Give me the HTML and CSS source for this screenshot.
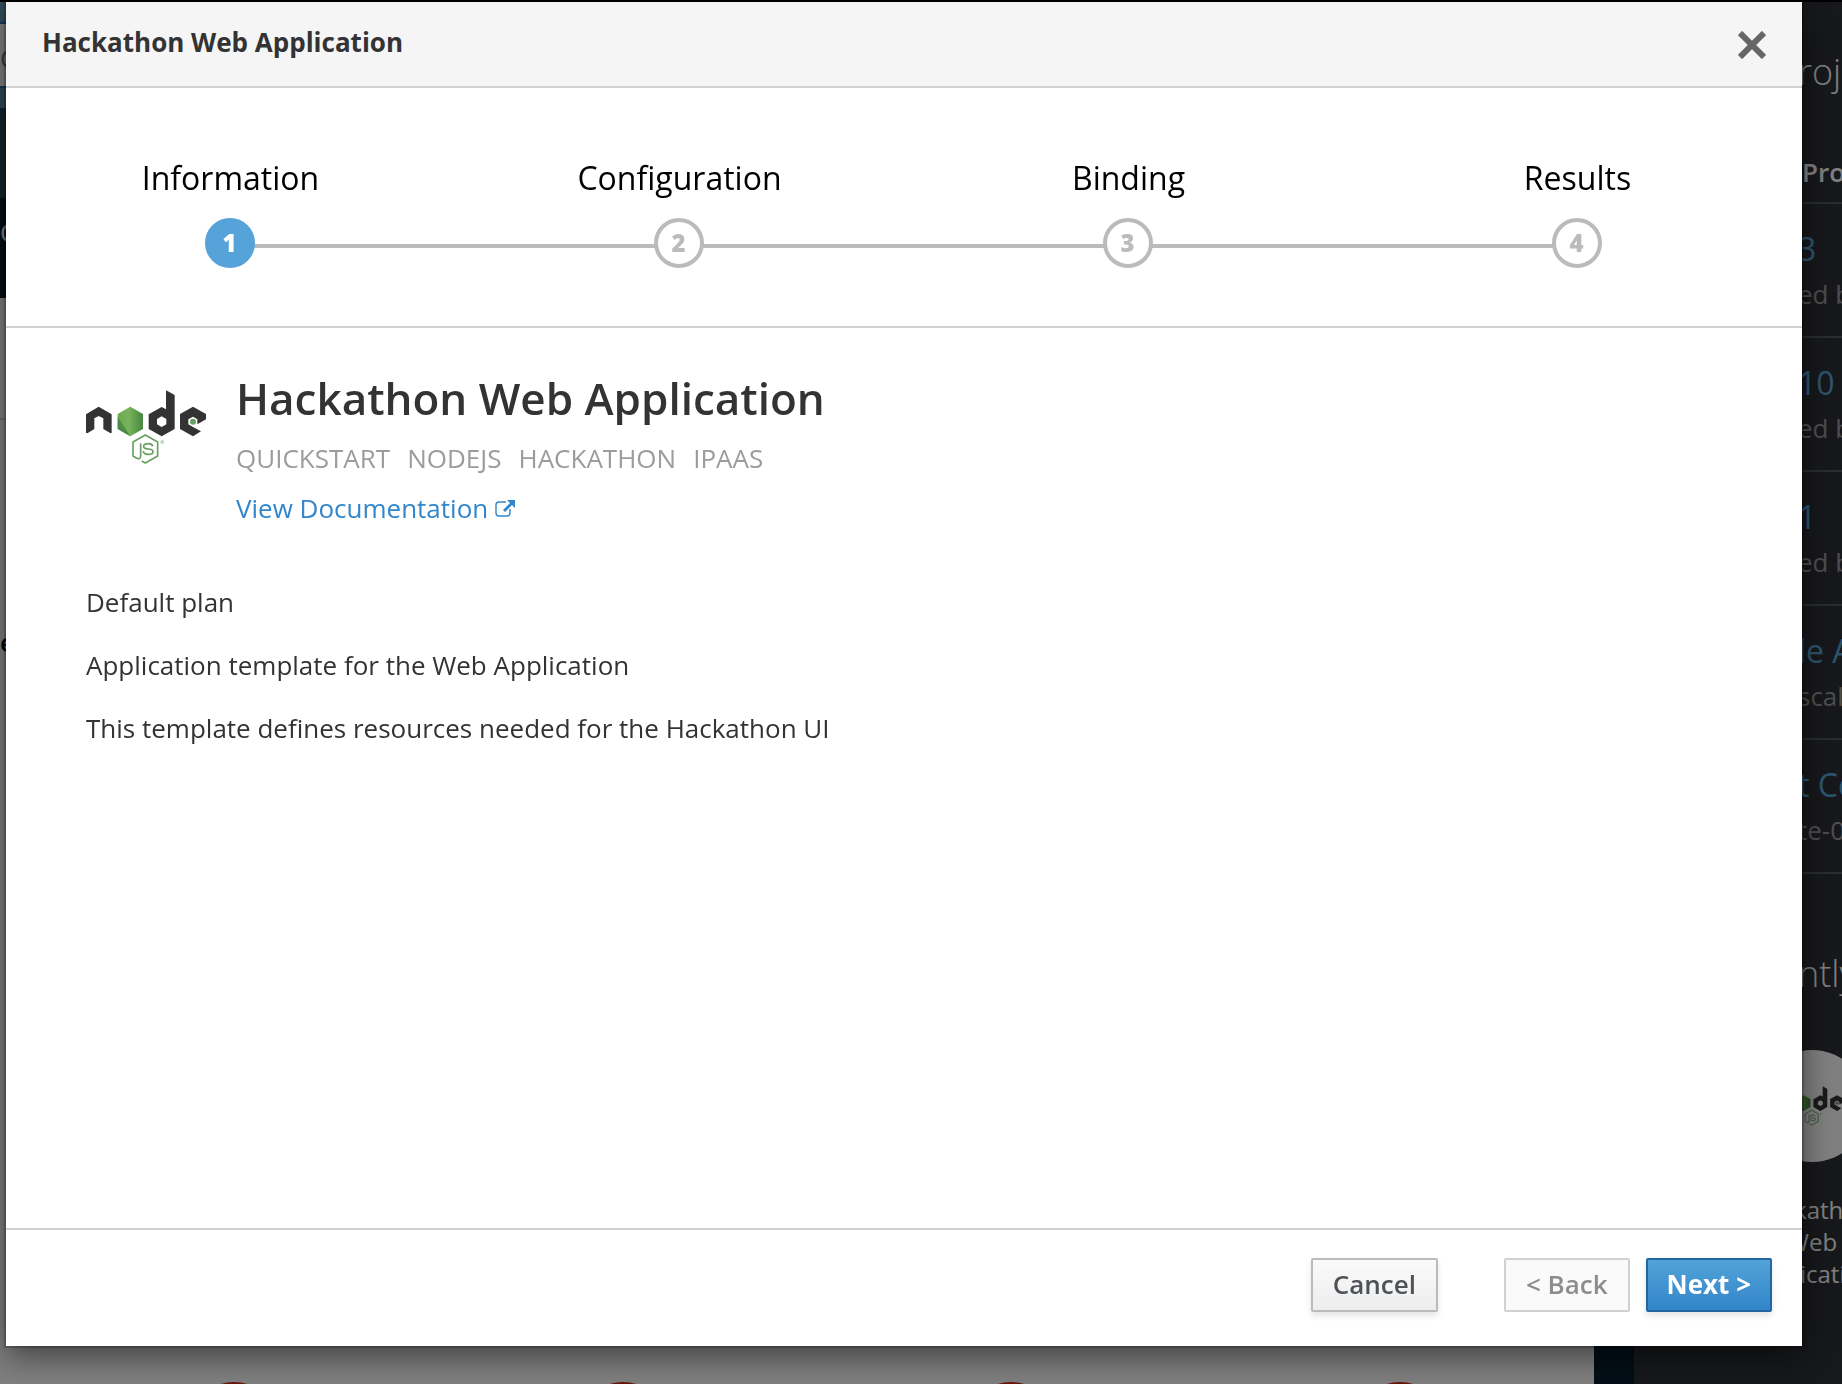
FILE: index.html
```html
<!DOCTYPE html>
<html lang="en">
<head>
<meta charset="utf-8">
<meta name="viewport" content="width=device-width, initial-scale=1">
<title>Hackathon Web Application</title>
<link rel="stylesheet" href="styles.css">
</head>
<body>
<svg class="defs" aria-hidden="true">
  <defs>
    <linearGradient id="leaf" x1="0" y1="0" x2="1" y2="0">
      <stop offset="0" stop-color="#6cab52"/><stop offset="0.45" stop-color="#76b35a"/><stop offset="1" stop-color="#47873f"/>
    </linearGradient>
    <symbol id="node-logo" viewBox="0 0 360 220">
      <g fill="#333">
        <path d="M0 72 38 49 77 72V127L74 129 52 116V84L38 77 25 84V116L4 129 0 127Z"/>
        <path fill-rule="evenodd" d="M240 2Q240-1 243 1L266 14V116L227 138 188 116V72L227 50 240 57ZM227 78 213 86V102L227 110 241 102V86Z"/>
        <path d="M321 49 360 71V87L334 102V87L321 79 307 87V102L321 110 345 123 321 138 282 116V71Z"/>
      </g>
      <path d="M133 49 171 71V116L133 138 95 116V71Z" fill="url(#leaf)"/>
      <path d="M95 80V116L133 138Z" fill="#4d8a46"/>
      <circle cx="321" cy="94" r="9" fill="#689f63"/>
      <g fill="none" stroke="#689f63" stroke-width="5" stroke-linejoin="round">
        <path d="M167 212 178 218 215 197V155L178 134 141 155V197L151 203Q164 209 164 197V159"/>
        <path d="M200 168Q198 160 187 160 173 160 173 168 173 175 186 176 201 177 201 184 201 192 187 192 172 192 172 182"/>
        <circle cx="229" cy="155" r="5" stroke-width="1"/>
        <path d="M227 158V152H230V155H227L231 158" stroke-width="1"/>
      </g>
    </symbol>
  </defs>
</svg>

<div class="page">
  <main class="catalog">
    <div class="mast"></div>
    <div class="search">C</div>
    <div class="mast-end"></div>
    <div class="nav"></div>
    <div class="tour">C</div>
    <div class="filters"></div>
    <div class="services">e</div>
    <div class="tiles"><i></i><i></i><i></i><i></i></div>
  </main>
  <div class="gutter"></div>
  <aside class="sidebar">
    <h2>roj</h2>
    <p class="create">Pro</p>
    <ul class="projects">
      <li><a href="#">3</a><span>ed b</span></li>
      <li><a href="#">10</a><span>ed b</span></li>
      <li><a href="#">1</a><span>ed b</span></li>
      <li><a href="#">le A</a><span>scal</span></li>
      <li><a href="#">t Ce</a><span>te-0</span></li>
    </ul>
    <h2 class="recent">ntly</h2>
    <div class="card">
      <div class="disc"><svg class="logo-small" aria-hidden="true"><use href="#node-logo"/></svg></div>
      <p>Hackathon<br>Web<br>Application</p>
    </div>
  </aside>
</div>

<div class="backdrop">
  <section class="modal" role="dialog" aria-labelledby="modal-title">
    <header class="modal-header">
      <h2 id="modal-title">Hackathon Web Application</h2>
      <button class="close" type="button" aria-label="Close">
        <svg viewBox="0 0 28 28" aria-hidden="true"><path d="M2 2 26 26M26 2 2 26"/></svg>
      </button>
    </header>
    <ol class="steps">
      <li class="active"><span class="label">Information</span><span class="number">1</span></li>
      <li><span class="label">Configuration</span><span class="number">2</span></li>
      <li><span class="label">Binding</span><span class="number">3</span></li>
      <li><span class="label">Results</span><span class="number">4</span></li>
    </ol>
    <div class="modal-body">
      <div class="service">
        <svg class="logo" role="img" aria-label="Node.js"><use href="#node-logo"/></svg>
        <div>
          <h1>Hackathon Web Application</h1>
          <ul class="tags"><li>QUICKSTART</li><li>NODEJS</li><li>HACKATHON</li><li>IPAAS</li></ul>
          <a class="docs" href="#">View Documentation
            <svg viewBox="0 0 20 18" aria-hidden="true"><path d="M11 3H4Q1 3 1 6V14Q1 17 4 17H12Q15 17 15 14V10" fill="none" stroke="currentColor" stroke-width="1.4"/><path d="M12 1H20V9L17 6 10 13 8 11 15 4Z" fill="currentColor"/></svg>
          </a>
        </div>
      </div>
      <div class="description">
        <p>Default plan</p>
        <p>Application template for the Web Application</p>
        <p>This template defines resources needed for the Hackathon UI</p>
      </div>
    </div>
    <footer class="modal-footer">
      <button class="btn cancel" type="button">Cancel</button>
      <button class="btn back" type="button" disabled>&lt; Back</button>
      <button class="btn next" type="button">Next &gt;</button>
    </footer>
  </section>
</div>
</body>
</html>
```
FILE: styles.css
```css
* { box-sizing: border-box; }

body {
  margin: 0;
  font-family: "Open Sans", "Noto Sans", sans-serif;
  font-size: 26px;
  line-height: 36px;
  color: #333;
  overflow: hidden;
}

h1, h2, p, ul, ol { margin: 0; padding: 0; }
ul, ol { list-style: none; }
a { text-decoration: none; }
.defs { position: absolute; width: 0; height: 0; }

/* Page behind the dialog */
.page {
  display: flex;
  height: 100vh;
  overflow: hidden;
  background: #fff;
}
.catalog {
  flex: 1;
  min-width: 0;
  display: flex;
  flex-direction: column;
}
.mast, .mast-end { height: 22px; background: #6294b0; flex: none; }
.search {
  height: 66px;
  flex: none;
  padding-top: 16px;
  border: solid #2272b0;
  border-width: 2px 0;
  background: #fff;
  color: #777;
}
.mast-end { height: 20px; }
.nav { height: 90px; flex: none; background: #284858; }
.tour { height: 100px; flex: none; padding-top: 16px; background: #051c2c; color: #fff; }
.filters { height: 122px; flex: none; border-bottom: 2px solid #ddd; }
.services { flex: 1; padding-top: 204px; color: #000; font-weight: 600; }
.tiles {
  display: grid;
  grid-template-columns: repeat(4, 1fr);
  justify-items: center;
  height: 2px;
  margin: 0 0 0 40px;
}
.tiles i { width: 92px; height: 92px; border-radius: 50%; background: #d62a12; }
.gutter { width: 40px; background: #051c2c; }
.sidebar {
  width: 208px;
  padding: 48px 0 0 164px;
  overflow: hidden;
  white-space: nowrap;
  background: #2e3036;
  color: #fff;
}
.sidebar h2 { font-size: 36px; line-height: 48px; font-weight: 300; }
.create { margin-top: 58px; padding: 0 0 12px 4px; border-bottom: 2px solid #56585c; font-weight: 600; }
.projects li { height: 134px; padding-top: 22px; border-bottom: 2px solid #56585c; }
.projects a { display: block; font-size: 32px; line-height: 46px; color: #5ba8dc; }
.projects span { display: block; line-height: 44px; color: #9c9c9c; }
.sidebar .recent { margin-top: 76px; }
.card {
  width: 156px;
  margin: 52px 0 0 -64px;
  display: flex;
  flex-direction: column;
  align-items: center;
  text-align: center;
  font-size: 24px;
  line-height: 32px;
}
.disc {
  display: flex;
  align-items: center;
  justify-content: center;
  width: 112px;
  height: 112px;
  margin-bottom: 32px;
  border-radius: 50%;
  background: #fff;
}
.logo-small { width: 64px; height: 40px; }

/* Dialog */
.backdrop {
  position: fixed;
  inset: 0;
  display: flex;
  padding: 2px 40px 38px 6px;
  background: linear-gradient(#000 2px, rgba(0, 0, 0, 0.5) 2px);
}
.modal {
  flex: 1;
  min-width: 0;
  display: flex;
  flex-direction: column;
  background: #fff;
  box-shadow: 0 0 0 2px rgba(0, 0, 0, 0.2), 0 10px 30px rgba(0, 0, 0, 0.5);
  clip-path: inset(0 -60px -60px -60px);
}
.modal-header {
  display: flex;
  align-items: flex-start;
  justify-content: space-between;
  padding: 22px 36px 26px;
  border-bottom: 2px solid #d1d1d1;
  background: #f5f5f5;
}
.modal-header h2 { font-size: 26px; line-height: 36px; font-weight: 700; }
.close { width: 28px; height: 28px; margin-top: 7px; padding: 0; border: 0; background: none; }
.close svg { display: block; width: 28px; height: 28px; fill: none; stroke: #666; stroke-width: 6px; }

.steps {
  display: grid;
  grid-template-columns: repeat(4, 1fr);
  padding: 68px 0 58px;
  border-bottom: 2px solid #d1d1d1;
  color: #000;
}
.steps li { position: relative; display: flex; flex-direction: column; align-items: center; gap: 18px; }
.steps li + li::before {
  content: "";
  position: absolute;
  top: 88px;
  left: -50%;
  width: 100%;
  height: 4px;
  background: #bbb;
}
.label { font-size: 32px; line-height: 44px; }
.number {
  position: relative;
  z-index: 1;
  width: 50px;
  height: 50px;
  margin-right: 2px;
  border: 4px solid #bbb;
  border-radius: 50%;
  background: #fff;
  color: #bbb;
  font-size: 24px;
  line-height: 42px;
  font-weight: 800;
  text-align: center;
}
.active .number { border-color: #55a3d8; background: #55a3d8; color: #fff; }

.modal-body { flex: 1; padding: 40px 80px; }
.service { display: flex; gap: 30px; }
.logo { flex: none; width: 120px; height: 74px; margin-top: 22px; }
.service h1 { font-size: 44px; line-height: 60px; font-weight: 600; }
.tags { display: flex; gap: 17px; margin: 12px 0 14px; color: #9c9c9c; }
.docs { display: inline-flex; align-items: center; gap: 7px; color: #3286cb; }
.docs svg { width: 20px; height: 18px; }
.description { display: grid; gap: 27px; margin-top: 58px; }

.modal-footer {
  display: flex;
  justify-content: flex-end;
  gap: 16px;
  padding: 28px 30px 34px;
  border-top: 2px solid #d1d1d1;
}
.btn {
  height: 54px;
  padding: 0 20px 2px;
  border: 2px solid #bbb;
  border-radius: 2px;
  background: linear-gradient(#fafafa, #ededed);
  box-shadow: 0 4px 6px rgba(3, 3, 3, 0.1);
  color: #4d5258;
  font: 600 26px/36px "Open Sans", "Noto Sans", sans-serif;
}
.cancel { margin-right: 50px; }
.back { border-color: #d1d1d1; background: #fafafa; box-shadow: none; color: #8b8d8f; }
.next { border-color: #23659e; background: linear-gradient(#52a3d8, #3285c9); color: #fff; font-weight: 700; padding-inline: 19px; }
```
